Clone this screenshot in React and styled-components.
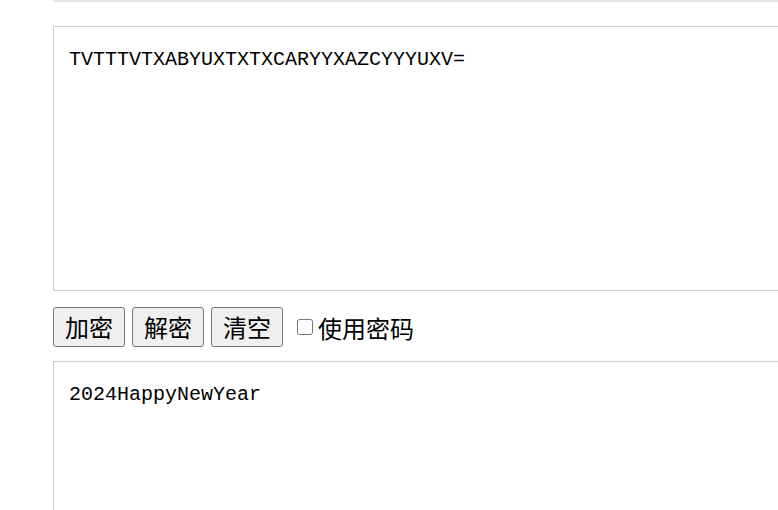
import React, { useState } from 'react';
import styled, { createGlobalStyle } from "styled-components";

const GlobalStyle = createGlobalStyle`
  html, body {
    margin: 0;
    padding: 0;
    background: #fff;
    overflow: hidden;
  }
`;

const Page = styled.div`
  width: 778px;
  height: 510px;
  overflow: hidden;
  padding-left: 53px;
  box-sizing: border-box;
`;

const TopEdge = styled.div`
  height: 2px;
  width: 800px;
  border-bottom: 2px solid #e6e6e6;
  margin-top: -2px;
  margin-bottom: 24px;
`;

const TextBox = styled.textarea`
  display: block;
  width: 780px;
  height: ${(p) => p.$h}px;
  box-sizing: border-box;
  border: 1px solid #cccccc;
  padding: 21px 15px 15px;
  margin: 0;
  font-family: "Liberation Mono", "Noto Sans CJK SC", monospace;
  font-size: 20px;
  line-height: 24px;
  color: #000;
  resize: none;
  outline: none;
  background: #fff;
`;

const Toolbar = styled.div`
  display: flex;
  align-items: center;
  gap: 7px;
  height: 40px;
  margin: 16px 0 14px;
`;

const Button = styled.button`
  height: 40px;
  padding: 0 11px;
  border: 1px solid #767676;
  border-radius: 3px;
  background: #efefef;
  color: #000;
  font-family: "Noto Sans CJK SC", sans-serif;
  font-size: 24px;
  line-height: 1;
  cursor: pointer;
`;

const CheckLabel = styled.label`
  display: flex;
  align-items: center;
  gap: 5px;
  margin-left: 7px;
  font-family: "Noto Sans CJK SC", sans-serif;
  font-size: 24px;
  color: #000;
`;

const Check = styled.input`
  width: 16px;
  height: 16px;
  margin: 0;
`;

export default function App() {
  const [cipher, setCipher] = useState("TVTTTVTXABYUXTXTXCARYYXAZCYYYUXV=");
  const [plain, setPlain] = useState("2024HappyNewYear");
  const [usePwd, setUsePwd] = useState(false);

  return (
    <>
      <GlobalStyle />
      <Page>
        <TopEdge />
        <TextBox $h={265} value={cipher} onChange={(e) => setCipher(e.target.value)} />
        <Toolbar>
          <Button>加密</Button>
          <Button>解密</Button>
          <Button onClick={() => { setCipher(''); setPlain(''); }}>清空</Button>
          <CheckLabel>
            <Check type="checkbox" checked={usePwd} onChange={(e) => setUsePwd(e.target.checked)} />
            使用密码
          </CheckLabel>
        </Toolbar>
        <TextBox $h={200} value={plain} onChange={(e) => setPlain(e.target.value)} />
      </Page>
    </>
  );
}
